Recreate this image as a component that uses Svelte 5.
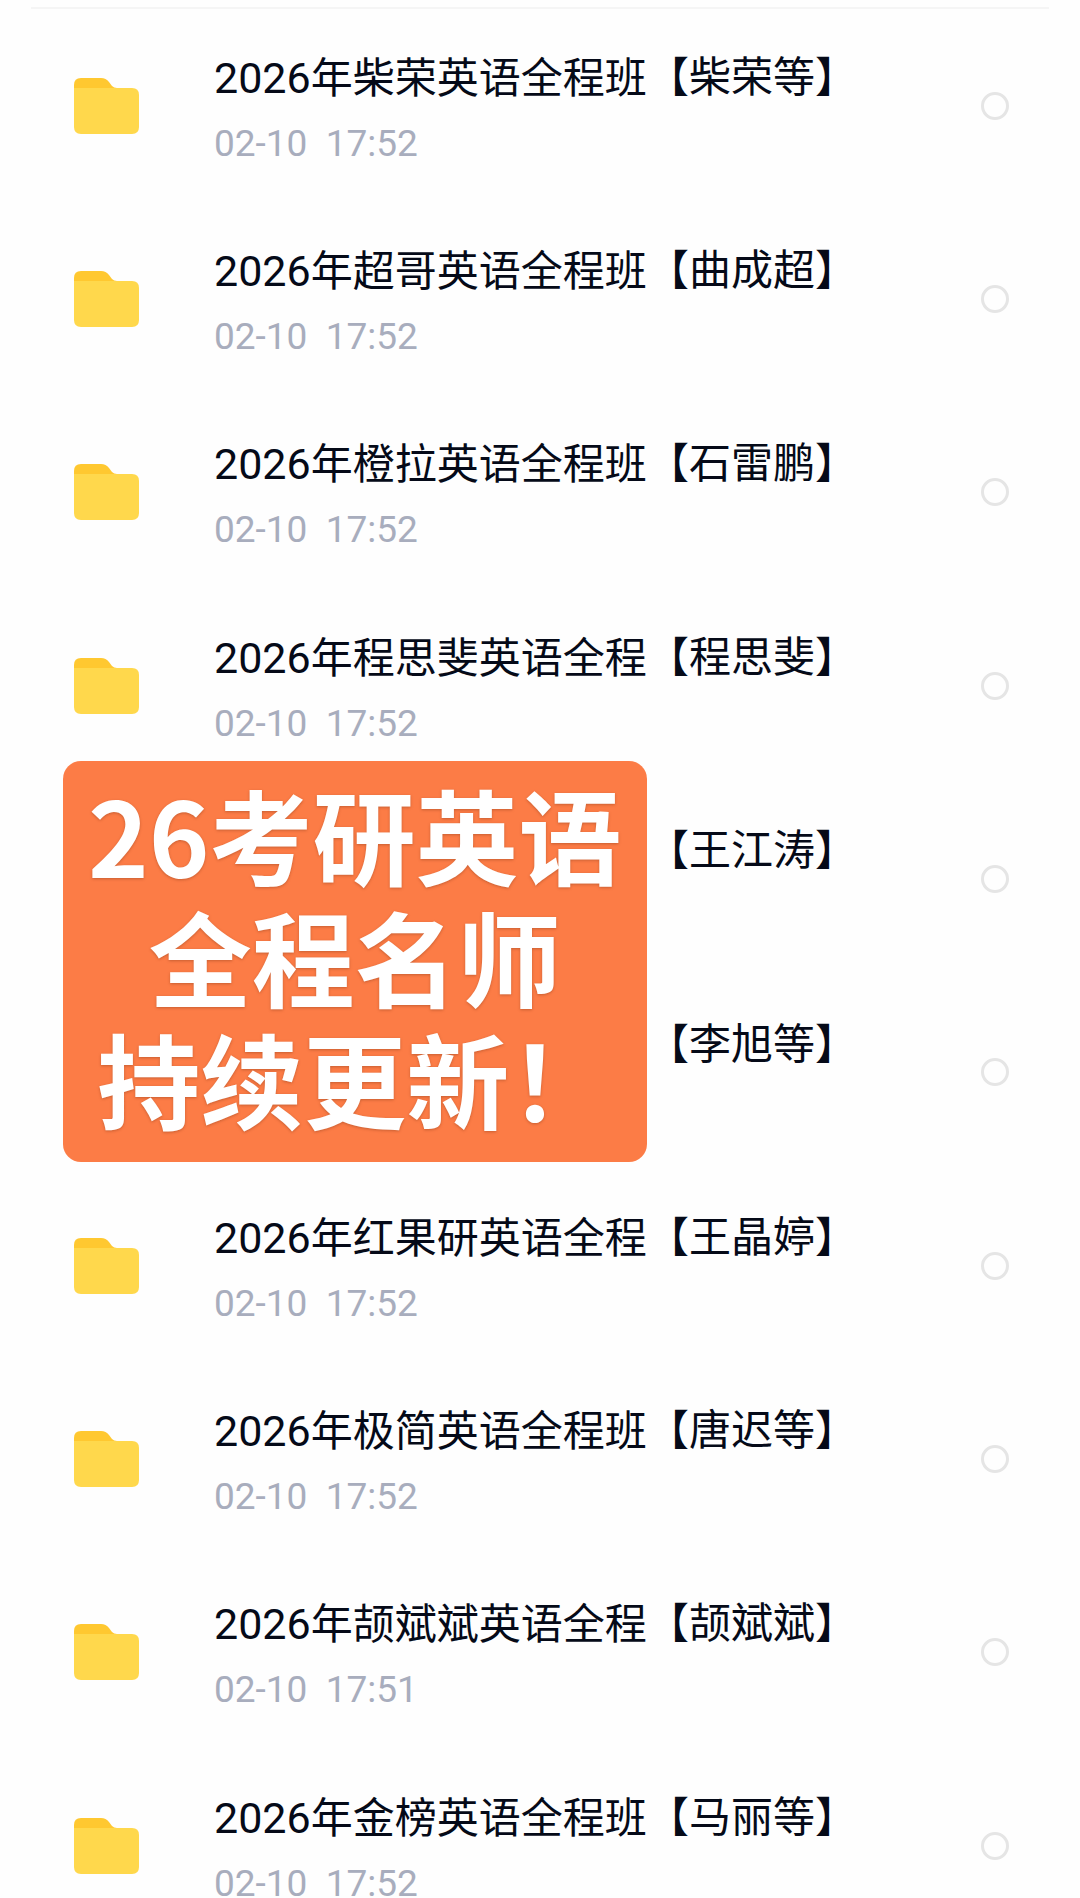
<script>
  let files = $state([
    { year: '2026', course: '年柴荣英语全程班', teacher: '【柴荣等】', time: '02-10  17:52', picked: false },
    { year: '2026', course: '年超哥英语全程班', teacher: '【曲成超】', time: '02-10  17:52', picked: false },
    { year: '2026', course: '年橙拉英语全程班', teacher: '【石雷鹏】', time: '02-10  17:52', picked: false },
    { year: '2026', course: '年程思斐英语全程', teacher: '【程思斐】', time: '02-10  17:52', picked: false },
    { year: '', course: '', teacher: '【王江涛】', time: '', picked: false },
    { year: '', course: '', teacher: '【李旭等】', time: '', picked: false },
    { year: '2026', course: '年红果研英语全程', teacher: '【王晶婷】', time: '02-10  17:52', picked: false },
    { year: '2026', course: '年极简英语全程班', teacher: '【唐迟等】', time: '02-10  17:52', picked: false },
    { year: '2026', course: '年颉斌斌英语全程', teacher: '【颉斌斌】', time: '02-10  17:51', picked: false },
    { year: '2026', course: '年金榜英语全程班', teacher: '【马丽等】', time: '02-10  17:52', picked: false }
  ]);
</script>

<main class="screen" lang="zh-CN">
  <ul class="file-list">
    {#each files as file, i}
      <li class="file-row">
        <svg class="folder" viewBox="0 0 65 56" aria-hidden="true">
          <path d="M0 20V7Q0 0 7 0H27Q32 0 35 4L38 8Q40 10 43 10V20Z" fill="#ffc830" />
          <path d="M0 10H58Q65 10 65 17V49Q65 56 58 56H7Q0 56 0 49Z" fill="#ffd84c" />
        </svg>
        <label class="info" for="file-{i}">
          <span class="name">
            <span class="course"><span class="year">{file.year}</span>{file.course}</span>
            <span>{file.teacher}</span>
          </span>
          <span class="time">{file.time}</span>
        </label>
        <input class="pick" type="checkbox" id="file-{i}" bind:checked={file.picked} />
      </li>
    {/each}
  </ul>

  <div class="banner">
    <p>26考研英语</p>
    <p>全程名师</p>
    <p>持续更新！</p>
  </div>
</main>

<style>
  :global(body) {
    background: #fefefe;
  }

  .screen {
    position: relative;
    height: 100vh;
    overflow: hidden;
    padding-top: 7px;
    box-sizing: border-box;
    font-family: Roboto, 'Noto Sans CJK SC', sans-serif;
  }

  .file-list {
    list-style: none;
    margin: 0 31px;
    padding: 0;
    border-top: 2px solid #f5f5f5;
  }

  .file-row {
    display: flex;
    align-items: center;
    height: 193px;
    padding: 0 40px 0 43px;
  }

  .file-row:nth-child(3n) {
    height: 194px;
  }

  .folder {
    flex: none;
    width: 65px;
    height: 56px;
  }

  .info {
    flex: 1;
    display: flex;
    flex-direction: column;
    gap: 13px;
    margin-left: 75px;
    padding-top: 6px;
  }

  .name {
    display: flex;
    font-size: 42px;
    line-height: 56px;
    white-space: nowrap;
    color: #050a18;
  }

  .course {
    min-width: 433px;
  }

  .year {
    font-size: 43px;
  }

  .time {
    min-height: 48px;
    font-size: 37px;
    line-height: 48px;
    white-space: pre;
    color: #a8adbd;
  }

  .pick {
    appearance: none;
    flex: none;
    width: 28px;
    height: 28px;
    margin: 0;
    border: 3px solid #e5e5e5;
    border-radius: 50%;
  }

  .pick:checked {
    border-color: #ffc830;
    background: #ffd84c;
  }

  .banner {
    position: absolute;
    top: 761px;
    left: 63px;
    padding: 12px 25px 23px;
    border-radius: 18px;
    background: #fc7c46;
    color: #fff;
    font-family: 'Noto Sans CJK SC', sans-serif;
    font-size: 103px;
    font-weight: 700;
    line-height: 122px;
    text-align: center;
    text-shadow: 0 1px 3px rgba(120, 50, 20, 0.4);
  }

  .banner p {
    margin: 0;
  }
</style>
